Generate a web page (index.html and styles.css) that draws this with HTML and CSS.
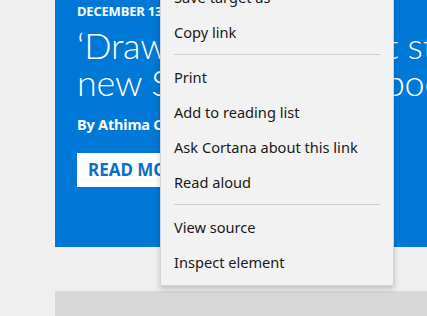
FILE: index.html
```html
<!DOCTYPE html>
<html lang="en">
  <head>
    <meta charset="UTF-8">
    <title>Context menu</title>
    <link rel="stylesheet" href="styles.css">
  </head>
  <body>
    <div class="page">
      <div class="hero">
        <p class="hero-date">DECEMBER 13, 2017</p>
        <h1 class="hero-title"><span class="line">‘Drawn Together’: art story</span><span class="line">new Surface Book 2book</span></h1>
        <p class="hero-author">By Athima Chansanchai</p>
        <a class="hero-button" href="#">READ MORE</a>
      </div>
      <div class="strip"></div>
    </div>

    <ul class="menu">
      <li class="menu-item">Save target as</li>
      <li class="menu-item">Copy link</li>
      <li class="menu-sep"></li>
      <li class="menu-item">Print</li>
      <li class="menu-item">Add to reading list</li>
      <li class="menu-item">Ask Cortana about this link</li>
      <li class="menu-item">Read aloud</li>
      <li class="menu-sep"></li>
      <li class="menu-item">View source</li>
      <li class="menu-item">Inspect element</li>
    </ul>
  </body>
</html>
```

FILE: styles.css
```css
* {
  box-sizing: border-box;
  margin: 0;
  padding: 0;
}

html, body {
  width: 427px;
  height: 316px;
  overflow: hidden;
  background-color: #efefef;
  font-family: "Noto Sans", "Open Sans", sans-serif;
}

.page {
  display: flex;
  flex-direction: column;
  gap: 44px;
  padding-left: 55px;
}

.hero {
  background-color: #0078d7;
  height: 247px;
  padding: 3px 0 0 22px;
  color: white;
  overflow: hidden;
  white-space: nowrap;
}

.hero-date {
  font-size: 13px;
  font-weight: 700;
  line-height: 16px;
  letter-spacing: -0.2px;
}

.hero-title {
  font-family: "Lato", "Open Sans", sans-serif;
  font-weight: 300;
  font-size: 36px;
  line-height: 37px;
  margin-top: 8px;
  letter-spacing: -0.2px;
}

.hero-title .line {
  display: block;
}

.hero-author {
  font-size: 14.5px;
  font-weight: 700;
  margin-top: 13px;
  line-height: 20px;
  letter-spacing: -0.2px;
}

.hero-button {
  display: inline-block;
  margin-top: 19px;
  background-color: white;
  color: #0a6fc8;
  font-size: 17px;
  font-weight: 700;
  text-decoration: none;
  padding: 6px 11px;
  line-height: 22px;
}

.strip {
  height: 30px;
  background-color: #d8d8d8;
}

.menu {
  position: absolute;
  left: 160px;
  top: -23px;
  width: 234px;
  list-style: none;
  background-color: #f2f2f2;
  border: 1px solid #d4d4d4;
  box-shadow: 0 3px 6px rgba(0, 0, 0, 0.2);
  padding: 2px 0 5px;
}

.menu-item {
  height: 35px;
  line-height: 35px;
  padding-left: 13px;
  font-size: 14.6px;
  color: #1a1a1a;
}

.menu-sep {
  height: 1px;
  margin: 4px 13px 5px;
  background-color: #cfcfcf;
}
```
